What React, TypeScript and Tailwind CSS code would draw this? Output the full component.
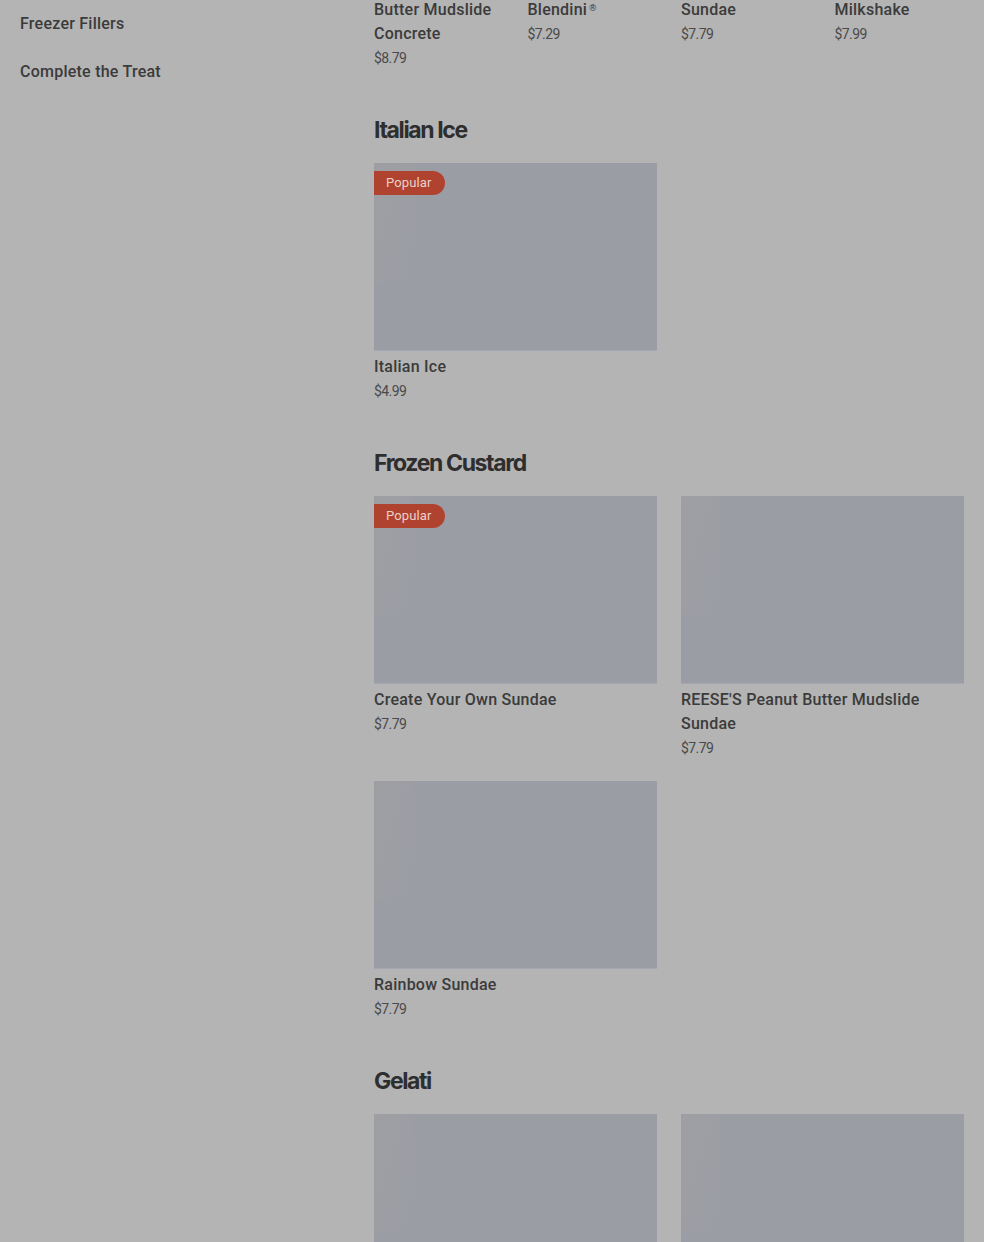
import React from "react";

type Item = { name?: string; price?: string; popular?: boolean };

const font = { fontFamily: "Roboto, 'Liberation Sans', sans-serif" } as const;

function Card({ item }: { item: Item }) {
  return (
    <div className="flex flex-col">
      <div className="relative h-[188px] w-full bg-[#9a9da4] border-b border-[#a3a8b3]">
        <div className="absolute left-0 top-0 h-[120px] w-[40px] bg-gradient-to-br from-[#a3a1a2] to-transparent opacity-50" />
        {item.popular && (
          <div className="absolute left-0 top-[8px] flex h-[24px] items-center rounded-r-full bg-[#b0432f] pl-[12px] pr-[13px] text-[13px] tracking-[0.01em] text-[#ead0c9]">
            Popular
          </div>
        )}
      </div>
      {item.name && (
        <div className="pt-[4px] text-[16px] leading-6 font-medium tracking-[0.015em] text-[#3b3b3b]">{item.name}</div>
      )}
      {item.price && (
        <div className="mt-[2px] text-[14px] leading-5 text-[#4a4a4a] tracking-[-0.04em]">{item.price}</div>
      )}
    </div>
  );
}

function Heading({ children }: { children: React.ReactNode }) {
  return (
    <h2
      className="text-[23px] leading-8 font-bold tracking-[-0.06em] text-[#2e2e2e]"
      style={{ fontFamily: "Inter, 'Liberation Sans', sans-serif" }}
    >
      {children}
    </h2>
  );
}

export default function App() {
  const top: { lines: React.ReactNode[]; price: string }[] = [
    { lines: ["Butter Mudslide", "Concrete"], price: "$8.79" },
    {
      lines: [
        <>
          Blendini
          <span
            className="relative -top-[4px] ml-[1px] text-[9px] leading-none text-[#3b3b3b]"
            style={{ fontFamily: "'DejaVu Sans', 'Liberation Sans', sans-serif" }}
          >
            {"\u00AE\uFE0E"}
          </span>
        </>,
      ],
      price: "$7.29",
    },
    { lines: ["Sundae"], price: "$7.79" },
    { lines: ["Milkshake"], price: "$7.99" },
  ];
  return (
    <div className="flex h-[1242px] w-[984px] overflow-hidden bg-[#b4b4b4]" style={font}>
      <aside className="w-[374px] shrink-0 px-[20px] pt-[12px]">
        <ul className="flex flex-col gap-[24px] text-[16px] leading-6 font-medium tracking-[0.015em] text-[#3b3b3b]">
          <li>Freezer Fillers</li>
          <li>Complete the Treat</li>
        </ul>
      </aside>
      <main className="w-[590px] shrink-0">
        <div className="-mt-[2px] grid grid-cols-4 gap-x-6">
          {top.map((t, i) => (
            <div key={i} className="flex flex-col">
              {t.lines.map((l, j) => (
                <div key={j} className="h-6 text-[16px] leading-6 font-medium tracking-[0.015em] text-[#3b3b3b]">
                  {l}
                </div>
              ))}
              <div className="mt-[2px] text-[14px] leading-5 text-[#4a4a4a] tracking-[-0.04em]">{t.price}</div>
            </div>
          ))}
        </div>

        <section className="mt-[46px]">
          <Heading>Italian Ice</Heading>
          <div className="mt-[17px] grid grid-cols-2 gap-x-6 gap-y-[23px]">
            <Card item={{ name: "Italian Ice", price: "$4.99", popular: true }} />
          </div>
        </section>

        <section className="mt-[46px]">
          <Heading>Frozen Custard</Heading>
          <div className="mt-[17px] grid grid-cols-2 gap-x-6 gap-y-[23px]">
            <Card item={{ name: "Create Your Own Sundae", price: "$7.79", popular: true }} />
            <Card item={{ name: "REESE'S Peanut Butter Mudslide Sundae", price: "$7.79" }} />
            <Card item={{ name: "Rainbow Sundae", price: "$7.79" }} />
          </div>
        </section>

        <section className="mt-[46px]">
          <Heading>Gelati</Heading>
          <div className="mt-[17px] grid grid-cols-2 gap-x-6 gap-y-[23px]">
            <Card item={{}} />
            <Card item={{}} />
          </div>
        </section>
      </main>
    </div>
  );
}
